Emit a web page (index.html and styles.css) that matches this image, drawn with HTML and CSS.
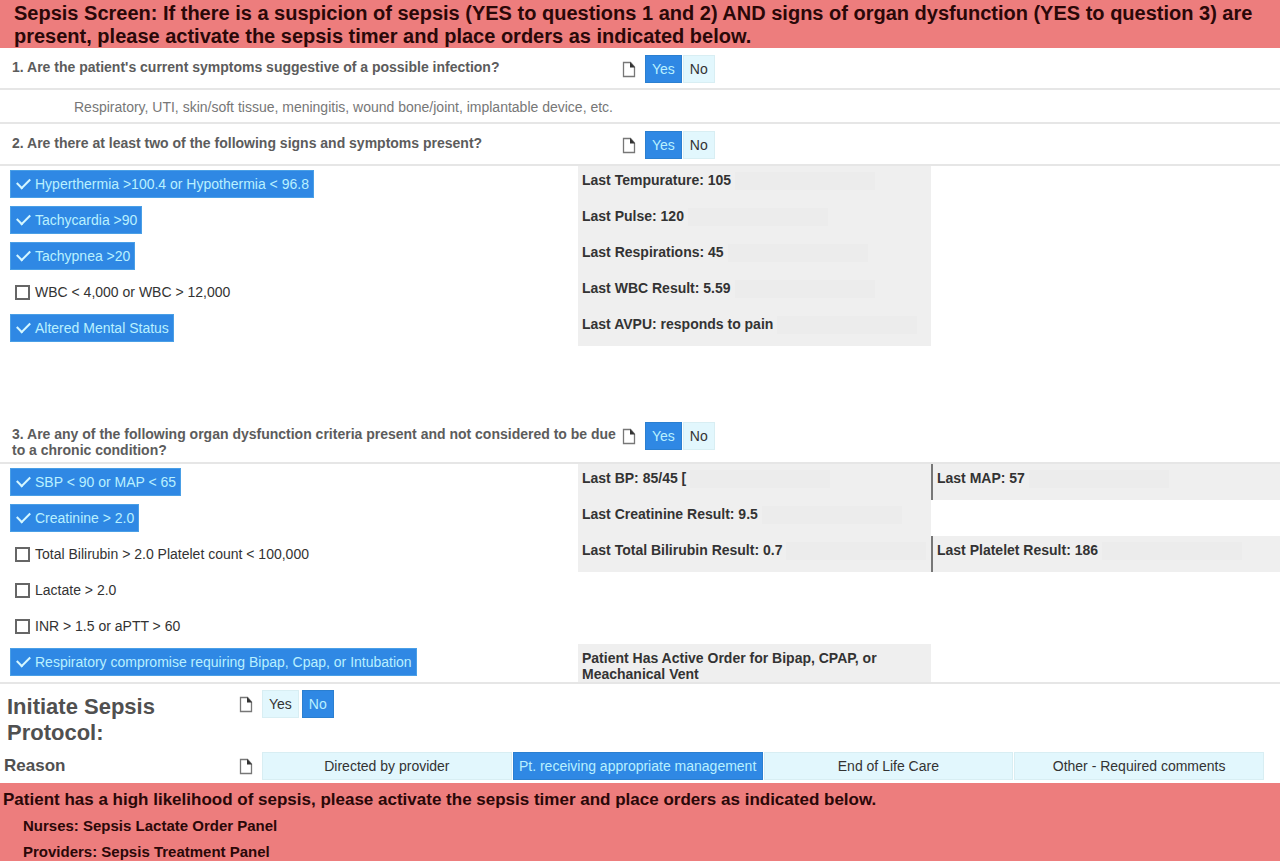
FILE: index.html
```html
<!DOCTYPE html>
<html lang="en">
<head>
    <meta charset="UTF-8">
    <meta name="viewport" content="width=device-width, initial-scale=1.0">
    <title>Sepsis Screen</title>
    <link rel="stylesheet" href="styles.css">
</head>
<body>
    <svg class="defs" aria-hidden="true">
        <symbol id="note" viewBox="0 0 14 17">
            <path d="M1.5 1.5H8.5L12.5 6V15.5H1.5Z" fill="#fff" stroke="#777" stroke-width="1.3"/>
            <path d="M8 1L13 6.5H8Z" fill="#333"/>
        </symbol>
    </svg>

    <header class="banner">
        <h1>Sepsis Screen: If there is a suspicion of sepsis (YES to questions 1 and 2) AND signs of organ dysfunction (YES to question 3) are present, please activate the sepsis timer and place orders as indicated below.</h1>
    </header>

    <main>
        <section class="question">
            <h2>1. Are the patient's current symptoms suggestive of a possible infection?</h2>
            <div class="answer">
                <svg class="note"><use href="#note"/></svg>
                <button class="choice selected" type="button">Yes</button>
                <button class="choice" type="button">No</button>
            </div>
        </section>

        <p class="hint">Respiratory, UTI, skin/soft tissue, meningitis, wound bone/joint, implantable device, etc.</p>

        <section class="question">
            <h2>2. Are there at least two of the following signs and symptoms present?</h2>
            <div class="answer">
                <svg class="note"><use href="#note"/></svg>
                <button class="choice selected" type="button">Yes</button>
                <button class="choice" type="button">No</button>
            </div>
        </section>

        <section class="criteria signs">
            <div class="row">
                <label class="item"><input type="checkbox" checked>Hyperthermia &gt;100.4 or Hypothermia &lt; 96.8</label>
                <p class="last">Last Tempurature: 105</p>
            </div>
            <div class="row">
                <label class="item"><input type="checkbox" checked>Tachycardia &gt;90</label>
                <p class="last">Last Pulse: 120</p>
            </div>
            <div class="row">
                <label class="item"><input type="checkbox" checked>Tachypnea &gt;20</label>
                <p class="last">Last Respirations: 45</p>
            </div>
            <div class="row">
                <label class="item"><input type="checkbox">WBC &lt; 4,000 or WBC &gt; 12,000</label>
                <p class="last">Last WBC Result: 5.59</p>
            </div>
            <div class="row">
                <label class="item"><input type="checkbox" checked>Altered Mental Status</label>
                <p class="last">Last AVPU: responds to pain</p>
            </div>
        </section>

        <section class="question">
            <h2>3. Are any of the following organ dysfunction criteria present and not considered to be due to a chronic condition?</h2>
            <div class="answer">
                <svg class="note"><use href="#note"/></svg>
                <button class="choice selected" type="button">Yes</button>
                <button class="choice" type="button">No</button>
            </div>
        </section>

        <section class="criteria organs">
            <div class="row">
                <label class="item"><input type="checkbox" checked>SBP &lt; 90 or MAP &lt; 65</label>
                <p class="last">Last BP: 85/45 [</p>
                <p class="last side">Last MAP: 57</p>
            </div>
            <div class="row">
                <label class="item"><input type="checkbox" checked>Creatinine &gt; 2.0</label>
                <p class="last">Last Creatinine Result: 9.5</p>
            </div>
            <div class="row">
                <label class="item"><input type="checkbox">Total Bilirubin &gt; 2.0 Platelet count &lt; 100,000</label>
                <p class="last">Last Total Bilirubin Result: 0.7</p>
                <p class="last side">Last Platelet Result: 186</p>
            </div>
            <div class="row">
                <label class="item"><input type="checkbox">Lactate &gt; 2.0</label>
            </div>
            <div class="row">
                <label class="item"><input type="checkbox">INR &gt; 1.5 or aPTT &gt; 60</label>
            </div>
            <div class="row">
                <label class="item"><input type="checkbox" checked>Respiratory compromise requiring Bipap, Cpap, or Intubation</label>
                <p class="last order">Patient Has Active Order for Bipap, CPAP, or Meachanical Vent</p>
            </div>
        </section>

        <section class="protocol">
            <h2>Initiate Sepsis Protocol:</h2>
            <div class="answer">
                <svg class="note"><use href="#note"/></svg>
                <button class="choice" type="button">Yes</button>
                <button class="choice selected" type="button">No</button>
            </div>
        </section>

        <section class="protocol reason">
            <h3>Reason</h3>
            <div class="answer">
                <svg class="note"><use href="#note"/></svg>
                <button class="choice" type="button">Directed by provider</button>
                <button class="choice selected" type="button">Pt. receiving appropriate management</button>
                <button class="choice" type="button">End of Life Care</button>
                <button class="choice" type="button">Other - Required comments</button>
            </div>
        </section>
    </main>

    <footer class="banner result">
        <p>Patient has a high likelihood of sepsis, please activate the sepsis timer and place orders as indicated below.</p>
        <ul>
            <li>Nurses: Sepsis Lactate Order Panel</li>
            <li>Providers: Sepsis Treatment Panel</li>
        </ul>
    </footer>
</body>
</html>
```
FILE: styles.css
```css
* {
    box-sizing: border-box;
}

body {
    margin: 0;
    font-family: "Liberation Sans", Arial, sans-serif;
    font-size: 14px;
    color: #333;
    background-color: #fff;
}

h1, h2, h3, p, ul {
    margin: 0;
}

.defs {
    display: none;
}

.banner {
    background-color: #ed7d7d;
    color: #2a0808;
    font-weight: bold;
}

.banner h1 {
    padding: 2px 14px 0;
    font-size: 20px;
    line-height: 23px;
}

.question {
    display: flex;
    align-items: flex-start;
    min-height: 42px;
    border-bottom: 2px solid #e6e6e6;
    padding: 7px 12px 4px;
}

.question h2 {
    width: 610px;
    padding-top: 4px;
    font-size: 14px;
    line-height: 16px;
    color: #5c5c5c;
}

.answer {
    display: flex;
    align-items: center;
    gap: 1px;
}

.note {
    width: 14px;
    height: 17px;
    margin-right: 8px;
    flex: none;
}

.choice {
    height: 28px;
    padding: 0 6px;
    border: 1px solid #d8eef3;
    background-color: #e2f7fd;
    color: #333;
    font-family: inherit;
    font-size: 14px;
    white-space: nowrap;
    cursor: pointer;
}

.choice.selected {
    border-color: #2b7fd0;
    background-color: #2f88e4;
    color: #b9f0ff;
}

.hint {
    padding: 9px 74px 7px;
    border-bottom: 2px solid #e6e6e6;
    line-height: 16px;
    color: #777;
}

.row {
    display: grid;
    grid-template-columns: 578fr 353fr 349fr;
    min-height: 36px;
}

.item {
    display: flex;
    align-items: center;
    justify-self: start;
    height: 28px;
    margin: 4px 0 4px 10px;
    padding: 0 5px;
    white-space: nowrap;
}

.item:has(input:checked) {
    background-color: #2f88e4;
    outline: 1px solid #4a9fe6;
    outline-offset: -1px;
    color: #b9f0ff;
}

.item input {
    display: grid;
    place-items: center;
    appearance: none;
    width: 15px;
    height: 15px;
    margin: 0 5px 0 0;
    border: 2px solid #666;
}

.item input:checked {
    border-color: transparent;
}

.item input:checked::before {
    content: "";
    width: 11px;
    height: 6px;
    border: solid #d5f7ff;
    border-width: 0 0 2px 2px;
    transform: translateY(-2px) rotate(-45deg);
}

.last {
    display: flex;
    gap: 4px;
    padding: 6px 4px;
    background-color: #efefef;
    font-weight: bold;
    line-height: 16px;
}

/* blanked timestamp after each value */
.last::after {
    content: "";
    width: 140px;
    height: 18px;
    background-color: #ececec;
}

.last.side {
    border-left: 2px solid #777;
}

.last.order {
    display: block;
    padding-right: 40px;
    padding-bottom: 0;
}

.last.order::after {
    display: none;
}

.signs {
    padding-bottom: 69px;
}

.organs {
    border-bottom: 2px solid #e6e6e6;
}

.protocol {
    display: flex;
    align-items: flex-start;
    padding: 6px 16px 0 7px;
}

.protocol h2, .protocol h3 {
    width: 232px;
    flex: none;
    color: #505050;
}

.protocol h2 {
    padding-top: 4px;
    font-size: 22px;
    line-height: 26px;
}

.protocol .choice {
    margin-right: 2px;
}

.reason {
    align-items: center;
    padding: 6px 16px 3px 4px;
}

.reason h3 {
    width: 235px;
    font-size: 17px;
}

.reason .answer {
    flex: 1;
}

.reason .choice {
    flex: 1 1 0;
    margin: 0;
    padding: 0;
}

.result {
    padding: 4px 3px 0;
    font-size: 17px;
    line-height: 26px;
}

.result ul {
    padding-left: 20px;
    font-size: 15px;
    list-style: none;
}
```
